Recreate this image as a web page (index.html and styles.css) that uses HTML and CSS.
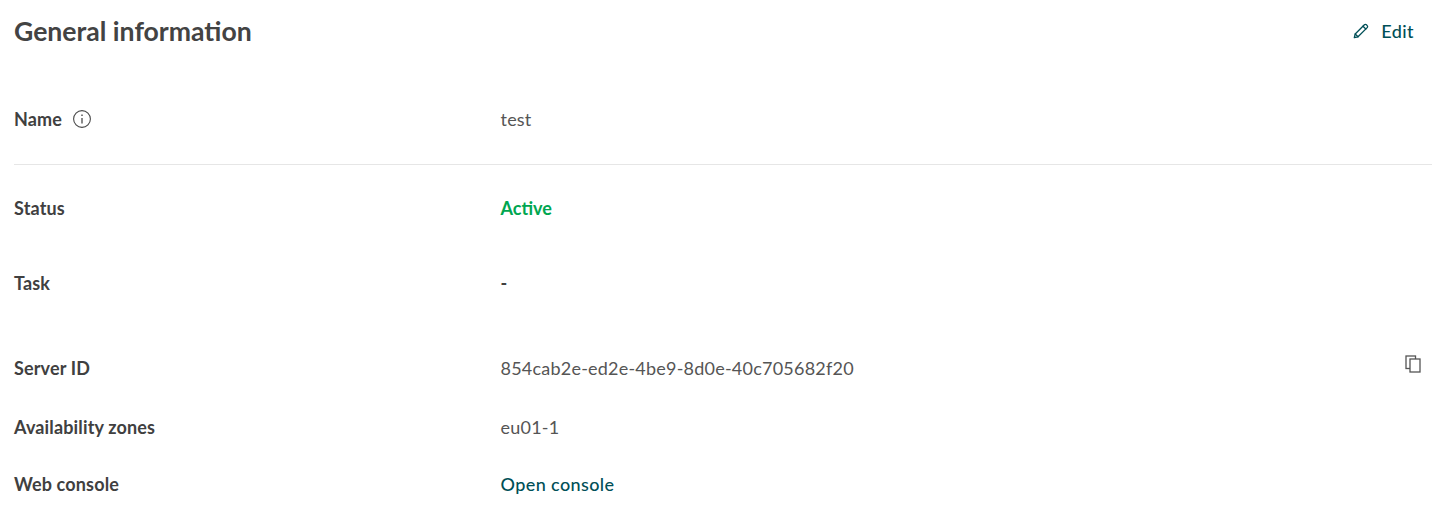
FILE: index.html
```html
<!DOCTYPE html>
<html lang="en">
<head>
<meta charset="utf-8">
<title>General information</title>
<link rel="stylesheet" href="styles.css">
</head>
<body>
<main class="panel">
  <header class="head">
    <h2 class="title">General information</h2>
    <a class="edit" href="#">
      <svg class="edit-icon" viewBox="0 0 16 16" width="16" height="16" fill="none" stroke="#004f57" stroke-width="1.3" stroke-linejoin="round" stroke-linecap="round"><path d="M1.3 14.7l.9-3.7L11.4 1.8a1.4 1.4 0 0 1 2 0l.8.8a1.4 1.4 0 0 1 0 2L5 13.8z"/><path d="M2.2 11l2.8 2.8M10 3.2l2.8 2.8"/></svg>
      <span>Edit</span>
    </a>
  </header>
  <div class="row row-name">
    <div class="label">Name
      <svg class="info" viewBox="0 0 18 18" width="18" height="18" fill="none" stroke="#4a4a4a" stroke-width="1.1"><circle cx="9" cy="9" r="8.4"/><path d="M9 8v5.4" stroke-width="1.3"/><path d="M9 4.5v1.6" stroke-width="1.4"/></svg>
    </div>
    <div class="value">test</div>
  </div>
  <div class="row row-status">
    <div class="label">Status</div>
    <div class="value active">Active</div>
  </div>
  <div class="row row-task">
    <div class="label">Task</div>
    <div class="value strong">-</div>
  </div>
  <div class="row row-id">
    <div class="label">Server ID</div>
    <div class="value grow">854cab2e-ed2e-4be9-8d0e-40c705682f20</div>
    <svg class="copy" viewBox="0 0 16 18" width="16" height="18" fill="#fff" stroke="#555" stroke-width="1.3"><rect x="1" y="1" width="9.5" height="12.5"/><rect x="5" y="4" width="10" height="13"/></svg>
  </div>
  <div class="row row-zone">
    <div class="label">Availability zones</div>
    <div class="value">eu01-1</div>
  </div>
  <div class="row row-console">
    <div class="label">Web console</div>
    <a class="value link" href="#">Open console</a>
  </div>
</main>
</body>
</html>
```
FILE: styles.css
```css
* { box-sizing: border-box; }
html, body { margin: 0; padding: 0; background: #fff; }
body { font-family: "Lato", "Open Sans", sans-serif; color: #404040; font-size: 18px; overflow: hidden; }
.panel { width: 1418px; margin-left: 14px; height: 519px; }
.head { display: flex; justify-content: space-between; align-items: center; height: 62px; padding-right: 18px; }
.title { margin: 0 0 1px; font-size: 26.6px; font-weight: 700; color: #434343; line-height: 60px; }
.edit { display: flex; align-items: center; gap: 12px; color: #004f57; text-decoration: none; font-weight: 500; letter-spacing: .4px; }
.row { display: flex; align-items: center; }
.label { width: 486.5px; font-weight: 700; color: #404040; display: flex; align-items: center; gap: 11px; letter-spacing: .15px; }
.value { color: #555; letter-spacing: .22px; }
.grow { flex: 1; }
.row-name { height: 103px; padding-top: 12px; border-bottom: 1px solid #e6e6e6; }
.row-status { height: 86px; }
.row-task { height: 64px; }
.row-id { height: 79px; padding-top: 27px; padding-right: 11px; }
.row-zone { height: 66px; }
.row-console { height: 48px; }
.active { color: #00a650; font-weight: 700; letter-spacing: 0; }
.strong { font-weight: 700; color: #404040; }
.link { color: #004f57; text-decoration: none; font-weight: 500; letter-spacing: .4px; }
.info { flex: none; }
.copy { flex: none; margin-top: -8px; }
```
